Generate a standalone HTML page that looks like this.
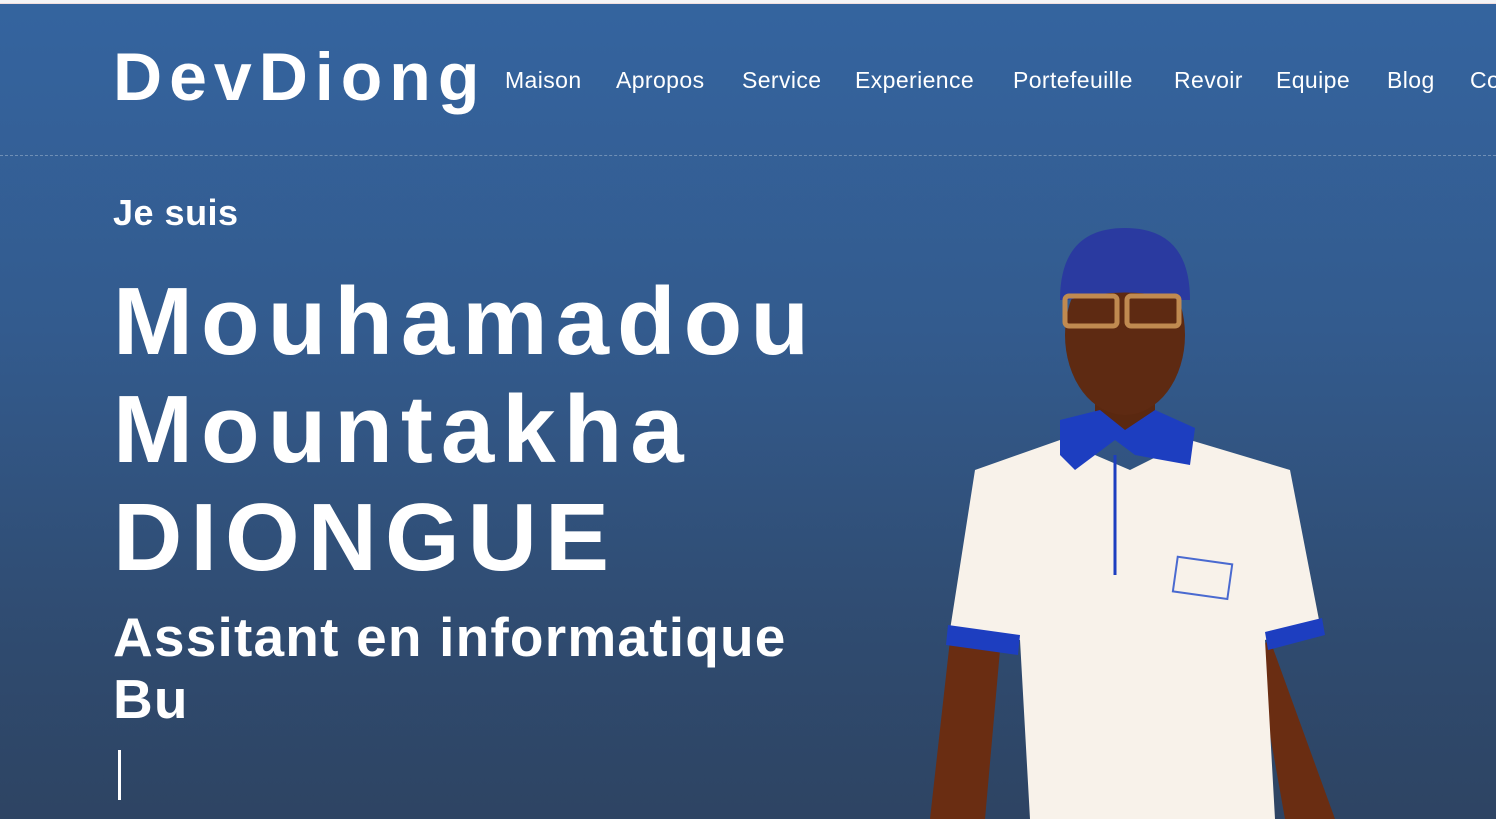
<!DOCTYPE html>
<html><head><meta charset="utf-8"><style>
*{margin:0;padding:0;box-sizing:border-box}
body{width:1496px;height:819px;overflow:hidden;font-family:"Liberation Sans",sans-serif;color:#fff;position:relative;background:linear-gradient(#34649f 0%,#335b8e 40%,#2f4a6e 80%,#2e4463 100%)}
.top{position:absolute;left:0;top:0;width:1496px;height:4px;background:#f4f4f6;border-bottom:1px solid #f0dede}
.logo{position:absolute;left:113px;top:38px;font-size:68px;font-weight:bold;letter-spacing:7px}
.nav a{position:absolute;top:67px;font-size:23px;color:#fff;text-decoration:none;letter-spacing:.4px}
.line{position:absolute;left:0;top:155px;width:1496px;border-top:1px dashed rgba(255,255,255,.3)}
.t{position:absolute;left:113px;white-space:nowrap}
</style></head><body>
<div class="top"></div>
<div class="logo">DevDiong</div>
<div class="nav">
<a style="left:505px">Maison</a><a style="left:616px">Apropos</a><a style="left:742px">Service</a><a style="left:855px">Experience</a><a style="left:1013px">Portefeuille</a><a style="left:1174px">Revoir</a><a style="left:1276px">Equipe</a><a style="left:1387px">Blog</a><a style="left:1470px">Co</a>
</div>
<div class="line"></div>
<div class="t" style="top:192px;font-size:36px;font-weight:bold;letter-spacing:.5px">Je suis</div>
<div class="t" style="top:268px;font-size:96px;font-weight:bold;letter-spacing:8px;line-height:108px">Mouhamadou<br>Mountakha<br>DIONGUE</div>
<div class="t" style="top:606px;font-size:55px;line-height:62px;font-weight:bold;letter-spacing:1.2px">Assitant en informatique<br>Bu</div>
<div style="position:absolute;left:118px;top:750px;width:3px;height:50px;background:#fff"></div>
<svg style="position:absolute;left:0;top:0" width="1496" height="819">
<path d="M950 640 L930 819 L985 819 L1000 650Z" fill="#6a2d12"/>
<path d="M1270 640 L1335 819 L1285 819 L1255 650Z" fill="#6a2d12"/>
<rect x="1095" y="360" width="60" height="80" fill="#5a2810"/>
<path d="M1060 440 L975 470 L950 630 L1020 640 L1030 819 L1275 819 L1265 640 L1320 625 L1290 470 L1190 440 L1130 470Z" fill="#f8f2ea"/>
<path d="M948 625 L1020 635 L1018 655 L946 645Z" fill="#1d3ec0"/>
<path d="M1265 632 L1322 618 L1325 635 L1268 650Z" fill="#1d3ec0"/>
<path d="M1060 420 L1100 410 L1125 430 L1155 410 L1195 428 L1190 465 L1135 455 L1115 440 L1075 470 L1060 455Z" fill="#1d3ec0"/>
<line x1="1115" y1="455" x2="1115" y2="575" stroke="#1d3ec0" stroke-width="3"/>
<ellipse cx="1125" cy="335" rx="60" ry="80" fill="#5e2a12"/>
<path d="M1060 300 Q1060 228 1125 228 Q1190 228 1190 300 L1180 300 Q1125 285 1068 300Z" fill="#2a3aa0"/>
<rect x="1065" y="296" width="52" height="30" rx="4" fill="none" stroke="#c08a50" stroke-width="5"/>
<rect x="1127" y="296" width="52" height="30" rx="4" fill="none" stroke="#c08a50" stroke-width="5"/>
<rect x="1175" y="560" width="55" height="35" fill="none" stroke="#4a6ad0" stroke-width="2" transform="rotate(8 1200 578)"/>
</svg>
</body></html>
